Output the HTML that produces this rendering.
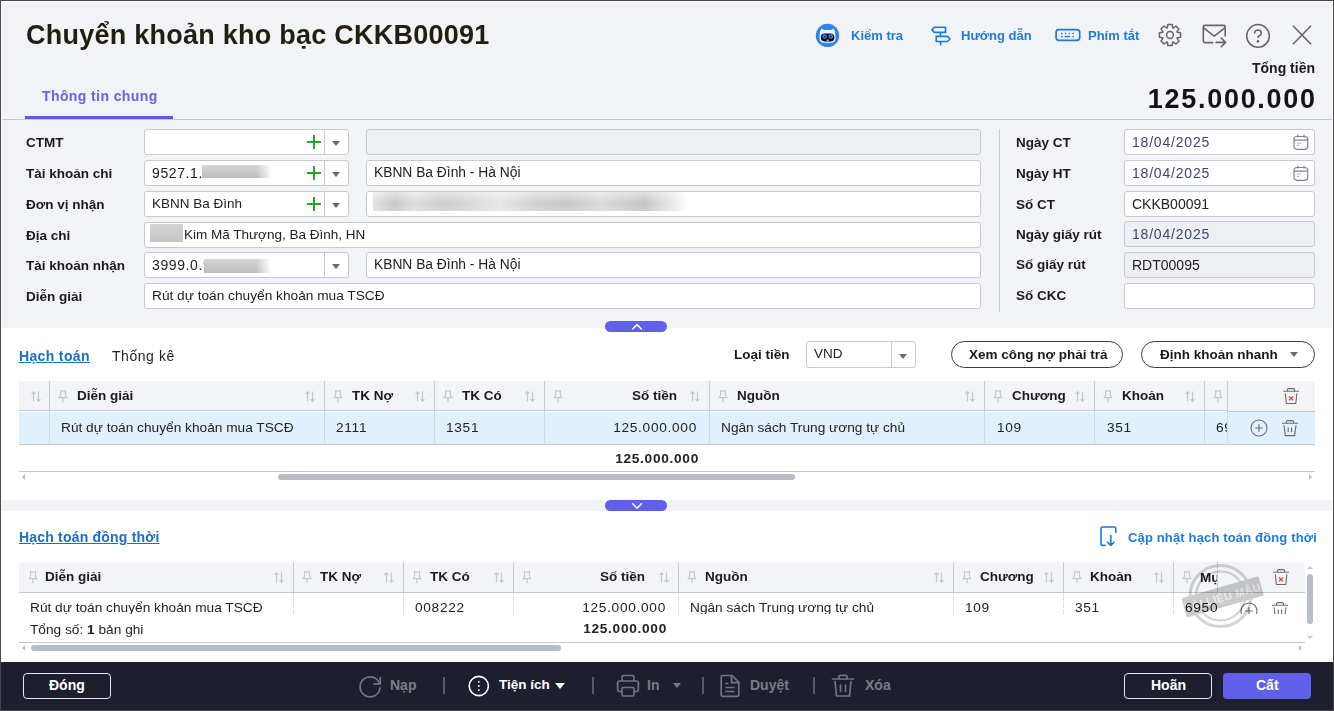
<!DOCTYPE html>
<html><head><meta charset="utf-8">
<style>
*{box-sizing:border-box;margin:0;padding:0}
html,body{width:1334px;height:711px;overflow:hidden;background:#f2f3f7;font-family:"Liberation Sans",sans-serif;color:#1f1f1f;position:relative}
.a{position:absolute}
.t{position:absolute;white-space:nowrap;line-height:1}
.b{font-weight:bold}
.frame{position:absolute;left:0;top:0;width:1334px;height:711px;border:1px solid #4a4846;pointer-events:none;z-index:60}
.inner{position:absolute;left:1px;top:1px;width:1332px;height:709px;border:1px solid #ffffff;pointer-events:none;z-index:59}
.inp{position:absolute;background:#fff;border:1px solid #c6c8d3;border-radius:3px;height:26px}
.dis{background:#eeeff3}
.lbl{position:absolute;font-weight:bold;font-size:13.5px;white-space:nowrap;line-height:1;color:#1a1a1a}
.val{position:absolute;font-size:13.5px;white-space:nowrap;line-height:1;color:#222}
.plus{position:absolute;left:162px;top:5px;width:14px;height:14px}
.plus:before{content:"";position:absolute;left:6px;top:0;width:2px;height:14px;background:#22aa22}
.plus:after{content:"";position:absolute;left:0;top:6px;width:14px;height:2px;background:#22aa22}
.sep{position:absolute;left:179px;top:0;width:1px;height:24px;background:#c6c8d3}
.tri{position:absolute;left:187px;top:11px;width:0;height:0;border-left:4.7px solid transparent;border-right:4.7px solid transparent;border-top:5.3px solid #6b6b6b}
.blur{position:absolute;background:linear-gradient(90deg,rgba(255,255,255,0) 0%,rgba(255,255,255,0) 78%,#fff 100%),linear-gradient(180deg,#d6d6d6,#bcbcbc);}
.blurb{position:absolute;background:linear-gradient(180deg,#d4d4d4,#c4c4c4)}
.blur2{position:absolute;background:linear-gradient(180deg,rgba(255,255,255,0.5) 0%,rgba(255,255,255,0) 55%,rgba(255,255,255,0.15) 100%),linear-gradient(90deg,#e0e0e0 0%,#c9c9c9 7%,#dcdcdc 13%,#cdcdcd 22%,#d6d6d6 30%,#e6e6e6 40%,#cfcfcf 52%,#c8c8c8 62%,#dadada 72%,#c4c4c4 86%,#f2f2f2 97%,#ffffff 100%)}
.cal{position:absolute;left:167px;top:3px}
.th{font-size:13.5px;color:#1a1a1a}
.td{font-size:13.7px;color:#222}
.dg{letter-spacing:0.7px}
.dg2{letter-spacing:0.6px;font-size:14px}
.dt{letter-spacing:0.8px;color:#3d4670;font-size:14px}
.dotv{position:absolute;width:1px;background:repeating-linear-gradient(180deg,#c2c5ce 0 1px,transparent 1px 2px)}
</style></head><body>
<div class="frame"></div><div class="inner"></div>
<!-- header -->
<div class="t b" style="left:26px;top:22px;font-size:27px;letter-spacing:0.25px;color:#231f10">Chuyển khoản kho bạc CKKB00091</div>
<div class="t b" style="left:42px;top:89px;font-size:14px;letter-spacing:0.4px;color:#6363e6">Thông tin chung</div>
<div class="a" style="left:25px;top:116px;width:148px;height:3px;background:#5b5be8"></div>
<div class="a" style="left:2px;top:119px;width:1330px;height:1px;background:#c5c7cf"></div>

<!-- toolbar -->
<svg class="a" style="left:815px;top:23px" width="25" height="25" viewBox="0 0 25 25">
  <circle cx="12.5" cy="12.4" r="11.7" fill="#3584e8"/>
  <path d="M5 8.5 L6.5 5.5 L9 7 L16 7 L18.5 5.5 L20 8.5 L20.5 15 Q20.5 19.5 16 19.8 L9 19.8 Q4.5 19.5 4.5 15 Z" fill="#eef5ff"/>
  <rect x="5.8" y="10.5" width="13.6" height="8" rx="4" fill="#0a0a14"/>
  <circle cx="9.6" cy="13.6" r="2.3" fill="#2f86f0"/><circle cx="15.8" cy="13.6" r="2.3" fill="#2f86f0"/>
  <circle cx="9.6" cy="13.6" r="0.9" fill="#1a1a30"/><circle cx="15.8" cy="13.6" r="0.9" fill="#1a1a30"/>
  <rect x="11.6" y="16.6" width="2.2" height="1.2" fill="#ddd"/>
</svg>
<div class="t b" style="left:851px;top:29px;font-size:13px;color:#1f7bd6">Kiểm tra</div>
<svg class="a" style="left:930px;top:25px" width="22" height="22" viewBox="0 0 22 22" fill="none" stroke="#1a7ad6" stroke-width="1.6" stroke-linejoin="round">
  <path d="M4.3 2.2 H15.5 V7.4 H4.3 L1.9 4.8 Z"/>
  <path d="M6.2 11.4 H17.5 L20 14 L17.5 16.5 H6.2 Z"/>
  <path d="M10.6 7.4 V11.4 M10.6 16.5 V20.4"/>
</svg>
<div class="t b" style="left:961px;top:29px;font-size:13px;color:#1f7bd6">Hướng dẫn</div>
<svg class="a" style="left:1054px;top:27px" width="28" height="16" viewBox="0 0 28 16" fill="none">
  <rect x="2.1" y="2.6" width="23.6" height="10.8" rx="2.8" stroke="#1a7ad6" stroke-width="1.7"/>
  <g fill="#1a7ad6"><rect x="7" y="5.8" width="1.6" height="1.4"/><rect x="10.8" y="5.8" width="1.6" height="1.4"/><rect x="14.6" y="5.8" width="1.6" height="1.4"/><rect x="18.4" y="5.8" width="1.6" height="1.4"/>
  <rect x="7" y="8.9" width="1.6" height="1.4"/><rect x="10.6" y="8.9" width="5.4" height="1.4"/><rect x="18.4" y="8.9" width="1.6" height="1.4"/></g>
</svg>
<div class="t b" style="left:1088px;top:29px;font-size:13px;color:#1f7bd6">Phím tắt</div>
<svg class="a" style="left:1156px;top:22px" width="28" height="28" viewBox="0 0 28 28" fill="none" stroke="#666" stroke-width="1.5" stroke-linejoin="round">
  <path d="M21.11 10.32 L24.58 10.85 L24.58 15.15 L21.11 15.68 L20.92 16.14 L23.00 18.97 L19.97 22.00 L17.14 19.92 L16.68 20.11 L16.15 23.58 L11.85 23.58 L11.32 20.11 L10.86 19.92 L8.03 22.00 L5.00 18.97 L7.08 16.14 L6.89 15.68 L3.42 15.15 L3.42 10.85 L6.89 10.32 L7.08 9.86 L5.00 7.03 L8.03 4.00 L10.86 6.08 L11.32 5.89 L11.85 2.42 L16.15 2.42 L16.68 5.89 L17.14 6.08 L19.97 4.00 L23.00 7.03 L20.92 9.86 Z"/>
  <circle cx="14" cy="13" r="3.4"/>
</svg>
<svg class="a" style="left:1200px;top:22px" width="30" height="28" viewBox="0 0 30 28" fill="none" stroke="#666" stroke-width="1.6" stroke-linecap="round" stroke-linejoin="round">
  <path d="M12.7 20.6 H5 Q3.3 20.6 3.3 19 V5 Q3.3 3.4 5 3.4 H23.5 Q25.2 3.4 25.2 5 V14"/>
  <path d="M3.6 5.8 L14.2 14.2 L24.8 5.8"/>
  <path d="M16.2 20.4 H25.6 M21.2 16 L25.6 20.4 L21.2 24.8"/>
</svg>
<svg class="a" style="left:1244px;top:22px" width="28" height="28" viewBox="0 0 28 28" fill="none" stroke="#666" stroke-width="1.5" stroke-linecap="round">
  <circle cx="14" cy="13.9" r="11.3"/>
  <path d="M10.6 11.1 Q10.8 7.9 14 7.9 Q17.3 7.9 17.3 10.9 Q17.3 13 14.2 14.5 V15.4"/>
  <circle cx="14" cy="19.3" r="0.6" fill="#666"/>
</svg>
<svg class="a" style="left:1290px;top:23px" width="24" height="24" viewBox="0 0 24 24" stroke="#666" stroke-width="1.6">
  <path d="M3 2.7 L21 21.2 M21 2.7 L3 21.2"/>
</svg>

<div class="t b" style="right:19px;top:61px;font-size:14px;color:#1a1a1a">Tổng tiền</div>
<div class="t b" style="right:17.3px;top:86px;font-size:27px;letter-spacing:1.7px;color:#141414">125.000.000</div>
<!-- form -->
<div class="lbl" style="left:26px;top:136px">CTMT</div>
<div class="lbl" style="left:26px;top:167px">Tài khoản chi</div>
<div class="lbl" style="left:26px;top:198px">Đơn vị nhận</div>
<div class="lbl" style="left:26px;top:229px">Địa chỉ</div>
<div class="lbl" style="left:26px;top:259px">Tài khoản nhận</div>
<div class="lbl" style="left:26px;top:290px">Diễn giải</div>

<!-- combos col1 -->
<div class="inp" style="left:144px;top:129px;width:205px"><div class="plus"></div><div class="sep"></div><div class="tri"></div></div>
<div class="inp" style="left:144px;top:160px;width:205px"><div class="val dg2" style="left:7px;top:5px">9527.1.</div><div class="blur" style="left:57px;top:4px;width:70px;height:13px"></div><div class="plus"></div><div class="sep"></div><div class="tri"></div></div>
<div class="inp" style="left:144px;top:191px;width:205px"><div class="val" style="left:7px;top:5px">KBNN Ba Đình</div><div class="plus"></div><div class="sep"></div><div class="tri"></div></div>
<div class="inp" style="left:144px;top:222px;width:837px"><div class="blurb" style="left:5px;top:1px;width:33px;height:18px"></div><div class="val" style="left:39px;top:5px">Kim Mã Thượng, Ba Đình, HN</div></div>
<div class="inp" style="left:144px;top:252px;width:205px"><div class="val dg2" style="left:7px;top:5px">3999.0.9</div><div class="blur" style="left:59px;top:6px;width:67px;height:14px"></div><div class="sep"></div><div class="tri"></div></div>
<div class="inp" style="left:144px;top:283px;width:837px"><div class="val" style="left:7px;top:5px;font-size:13.7px">Rút dự toán chuyển khoản mua TSCĐ</div></div>

<!-- col2 -->
<div class="inp dis" style="left:366px;top:129px;width:615px"></div>
<div class="inp" style="left:366px;top:160px;width:615px"><div class="val" style="left:7px;top:5px;font-size:13.8px">KBNN Ba Đình - Hà Nội</div></div>
<div class="inp" style="left:366px;top:191px;width:615px"><div class="blur2" style="left:6px;top:0px;width:316px;height:19px"></div></div>
<div class="inp" style="left:366px;top:252px;width:615px"><div class="val" style="left:7px;top:5px;font-size:13.8px">KBNN Ba Đình - Hà Nội</div></div>

<!-- divider -->
<div class="a" style="left:999px;top:129px;width:1px;height:183px;background:#c8cad3"></div>

<!-- right labels -->
<div class="lbl" style="left:1016px;top:136px">Ngày CT</div>
<div class="lbl" style="left:1016px;top:167px">Ngày HT</div>
<div class="lbl" style="left:1016px;top:198px">Số CT</div>
<div class="lbl" style="left:1016px;top:228px">Ngày giấy rút</div>
<div class="lbl" style="left:1016px;top:258px">Số giấy rút</div>
<div class="lbl" style="left:1016px;top:289px">Số CKC</div>

<div class="inp" style="left:1124px;top:129px;width:191px"><div class="val dt" style="left:7px;top:5px">18/04/2025</div><svg class="cal" width="18" height="18" viewBox="0 0 18 18"><rect x="2" y="3.5" width="13.8" height="12.8" rx="3" fill="none" stroke="#7c839b" stroke-width="1.2"/><path d="M2 7.2 H15.8 M5.8 1.8 V4.6 M12 1.8 V4.6" stroke="#7c839b" stroke-width="1.2"/><rect x="5.3" y="9.6" width="1.2" height="1.1" fill="#7c839b"/><rect x="7.6" y="9.6" width="1.2" height="1.1" fill="#7c839b"/><rect x="5.3" y="11.9" width="1.2" height="1.1" fill="#7c839b"/></svg></div>
<div class="inp" style="left:1124px;top:160px;width:191px"><div class="val dt" style="left:7px;top:5px">18/04/2025</div><svg class="cal" width="18" height="18" viewBox="0 0 18 18"><rect x="2" y="3.5" width="13.8" height="12.8" rx="3" fill="none" stroke="#7c839b" stroke-width="1.2"/><path d="M2 7.2 H15.8 M5.8 1.8 V4.6 M12 1.8 V4.6" stroke="#7c839b" stroke-width="1.2"/><rect x="5.3" y="9.6" width="1.2" height="1.1" fill="#7c839b"/><rect x="7.6" y="9.6" width="1.2" height="1.1" fill="#7c839b"/><rect x="5.3" y="11.9" width="1.2" height="1.1" fill="#7c839b"/></svg></div>
<div class="inp" style="left:1124px;top:191px;width:191px"><div class="val" style="left:7px;top:5px;font-size:14px">CKKB00091</div></div>
<div class="inp dis" style="left:1124px;top:221px;width:191px"><div class="val dt" style="left:7px;top:5px">18/04/2025</div></div>
<div class="inp dis" style="left:1124px;top:252px;width:191px"><div class="val" style="left:7px;top:5px;font-size:14px">RDT00095</div></div>
<div class="inp" style="left:1124px;top:283px;width:191px"></div>

<!-- collapse up -->
<div class="a" style="left:605px;top:321px;width:62px;height:11px;background:#5f5fea;border-radius:5.5px;z-index:5"><svg class="a" style="left:26px;top:1px" width="12" height="9" viewBox="0 0 12 9"><path d="M1.2 7.5 L6 2.6 L10.8 7.5" fill="none" stroke="#fff" stroke-width="1.6"/></svg></div>
<!-- section 2 white -->
<div class="a" style="left:2px;top:328px;width:1330px;height:172px;background:#fff"></div>
<!-- section 3 white -->
<div class="a" style="left:2px;top:511px;width:1330px;height:151px;background:#fff"></div>
<div class="t b" style="left:19px;top:349px;font-size:14px;letter-spacing:0.35px;color:#1a70c8;text-decoration:underline">Hạch toán</div>
<div class="t" style="left:112px;top:349px;font-size:14px;letter-spacing:0.55px;color:#1f1f1f">Thống kê</div>
<div class="t b" style="left:734px;top:348px;font-size:13.5px;color:#1a1a1a">Loại tiền</div>
<div class="inp" style="left:806px;top:341px;width:110px;height:27px"><div class="val" style="left:7px;top:5px;font-size:13.5px">VND</div><div class="sep" style="left:84px;height:25px"></div><div class="tri" style="left:92px;top:11.5px"></div></div>
<div class="a" style="left:951px;top:341px;width:172px;height:27px;border:1px solid #3a3a3a;border-radius:14px;background:#fff"></div>
<div class="t b" style="left:969px;top:348px;font-size:13.5px;color:#1a1a1a">Xem công nợ phải trả</div>
<div class="a" style="left:1141px;top:341px;width:174px;height:27px;border:1px solid #3a3a3a;border-radius:14px;background:#fff"></div>
<div class="t b" style="left:1160px;top:348px;font-size:13.5px;color:#1a1a1a">Định khoản nhanh</div>
<div class="a" style="left:1290px;top:352px;width:0;height:0;border-left:4.5px solid transparent;border-right:4.5px solid transparent;border-top:5.5px solid #6b6b6b"></div>
<div class="a" style="left:19px;top:381px;width:1296px;height:30px;background:#f3f4f8;border-bottom:1px solid #c5c8d1"></div>
<div class="a" style="left:19px;top:411px;width:1296px;height:34px;background:#e1f0fd;border-top:1px solid #fff;border-bottom:1px solid #c5c8d1"></div>
<div class="a" style="left:19px;top:471px;width:1296px;height:1px;background:#c5c8d1"></div>
<div class="a" style="left:278px;top:474px;width:517px;height:6px;border-radius:3px;background:#b8bcc5"></div>
<div class="a" style="left:22px;top:474px;width:0;height:0;border-top:3.2px solid transparent;border-bottom:3.2px solid transparent;border-right:3px solid #b8bcc5"></div>
<div class="a" style="left:1309px;top:474px;width:0;height:0;border-top:3.2px solid transparent;border-bottom:3.2px solid transparent;border-left:3px solid #b8bcc5"></div>
<svg class="a" style="left:31px;top:391px" width="10" height="11" viewBox="0 0 10 11" fill="none" stroke="#c3c6cf" stroke-width="1.2"><path d="M2.5 10.5 V0.8 M0.6 2.8 L2.5 0.8 L4.4 2.8 M7.5 0.5 V10.2 M5.6 8.2 L7.5 10.2 L9.4 8.2"/></svg>
<div class="a" style="left:49px;top:381px;width:1px;height:29px;background:#c8cad3"></div>
<div class="a dotv" style="left:49px;top:411px;height:33px"></div>
<svg class="a" style="left:58px;top:390px" width="10" height="13" viewBox="0 0 10 13" fill="none" stroke="#c3c6cf" stroke-width="1.2"><path d="M2.6 0.8 H7.4 V5.2 L8.8 7.6 H1.2 L2.6 5.2 Z M5 7.6 V12.3"/></svg>
<div class="t b th" style="left:77px;top:389px">Diễn giải</div>
<svg class="a" style="left:305px;top:391px" width="10" height="11" viewBox="0 0 10 11" fill="none" stroke="#c3c6cf" stroke-width="1.2"><path d="M2.5 10.5 V0.8 M0.6 2.8 L2.5 0.8 L4.4 2.8 M7.5 0.5 V10.2 M5.6 8.2 L7.5 10.2 L9.4 8.2"/></svg>
<div class="a" style="left:324px;top:381px;width:1px;height:29px;background:#c8cad3"></div>
<div class="a dotv" style="left:324px;top:411px;height:33px"></div>
<svg class="a" style="left:333px;top:390px" width="10" height="13" viewBox="0 0 10 13" fill="none" stroke="#c3c6cf" stroke-width="1.2"><path d="M2.6 0.8 H7.4 V5.2 L8.8 7.6 H1.2 L2.6 5.2 Z M5 7.6 V12.3"/></svg>
<div class="t b th" style="left:352px;top:389px">TK Nợ</div>
<svg class="a" style="left:415px;top:391px" width="10" height="11" viewBox="0 0 10 11" fill="none" stroke="#c3c6cf" stroke-width="1.2"><path d="M2.5 10.5 V0.8 M0.6 2.8 L2.5 0.8 L4.4 2.8 M7.5 0.5 V10.2 M5.6 8.2 L7.5 10.2 L9.4 8.2"/></svg>
<div class="a" style="left:434px;top:381px;width:1px;height:29px;background:#c8cad3"></div>
<div class="a dotv" style="left:434px;top:411px;height:33px"></div>
<svg class="a" style="left:443px;top:390px" width="10" height="13" viewBox="0 0 10 13" fill="none" stroke="#c3c6cf" stroke-width="1.2"><path d="M2.6 0.8 H7.4 V5.2 L8.8 7.6 H1.2 L2.6 5.2 Z M5 7.6 V12.3"/></svg>
<div class="t b th" style="left:462px;top:389px">TK Có</div>
<svg class="a" style="left:525px;top:391px" width="10" height="11" viewBox="0 0 10 11" fill="none" stroke="#c3c6cf" stroke-width="1.2"><path d="M2.5 10.5 V0.8 M0.6 2.8 L2.5 0.8 L4.4 2.8 M7.5 0.5 V10.2 M5.6 8.2 L7.5 10.2 L9.4 8.2"/></svg>
<div class="a" style="left:544px;top:381px;width:1px;height:29px;background:#c8cad3"></div>
<div class="a dotv" style="left:544px;top:411px;height:33px"></div>
<svg class="a" style="left:553px;top:390px" width="10" height="13" viewBox="0 0 10 13" fill="none" stroke="#c3c6cf" stroke-width="1.2"><path d="M2.6 0.8 H7.4 V5.2 L8.8 7.6 H1.2 L2.6 5.2 Z M5 7.6 V12.3"/></svg>
<div class="t b th" style="right:657px;top:389px">Số tiền</div>
<svg class="a" style="left:690px;top:391px" width="10" height="11" viewBox="0 0 10 11" fill="none" stroke="#c3c6cf" stroke-width="1.2"><path d="M2.5 10.5 V0.8 M0.6 2.8 L2.5 0.8 L4.4 2.8 M7.5 0.5 V10.2 M5.6 8.2 L7.5 10.2 L9.4 8.2"/></svg>
<div class="a" style="left:709px;top:381px;width:1px;height:29px;background:#c8cad3"></div>
<div class="a dotv" style="left:709px;top:411px;height:33px"></div>
<svg class="a" style="left:718px;top:390px" width="10" height="13" viewBox="0 0 10 13" fill="none" stroke="#c3c6cf" stroke-width="1.2"><path d="M2.6 0.8 H7.4 V5.2 L8.8 7.6 H1.2 L2.6 5.2 Z M5 7.6 V12.3"/></svg>
<div class="t b th" style="left:737px;top:389px">Nguồn</div>
<svg class="a" style="left:965px;top:391px" width="10" height="11" viewBox="0 0 10 11" fill="none" stroke="#c3c6cf" stroke-width="1.2"><path d="M2.5 10.5 V0.8 M0.6 2.8 L2.5 0.8 L4.4 2.8 M7.5 0.5 V10.2 M5.6 8.2 L7.5 10.2 L9.4 8.2"/></svg>
<div class="a" style="left:984px;top:381px;width:1px;height:29px;background:#c8cad3"></div>
<div class="a dotv" style="left:984px;top:411px;height:33px"></div>
<svg class="a" style="left:993px;top:390px" width="10" height="13" viewBox="0 0 10 13" fill="none" stroke="#c3c6cf" stroke-width="1.2"><path d="M2.6 0.8 H7.4 V5.2 L8.8 7.6 H1.2 L2.6 5.2 Z M5 7.6 V12.3"/></svg>
<div class="t b th" style="left:1012px;top:389px">Chương</div>
<svg class="a" style="left:1075px;top:391px" width="10" height="11" viewBox="0 0 10 11" fill="none" stroke="#c3c6cf" stroke-width="1.2"><path d="M2.5 10.5 V0.8 M0.6 2.8 L2.5 0.8 L4.4 2.8 M7.5 0.5 V10.2 M5.6 8.2 L7.5 10.2 L9.4 8.2"/></svg>
<div class="a" style="left:1094px;top:381px;width:1px;height:29px;background:#c8cad3"></div>
<div class="a dotv" style="left:1094px;top:411px;height:33px"></div>
<svg class="a" style="left:1103px;top:390px" width="10" height="13" viewBox="0 0 10 13" fill="none" stroke="#c3c6cf" stroke-width="1.2"><path d="M2.6 0.8 H7.4 V5.2 L8.8 7.6 H1.2 L2.6 5.2 Z M5 7.6 V12.3"/></svg>
<div class="t b th" style="left:1122px;top:389px">Khoản</div>
<svg class="a" style="left:1185px;top:391px" width="10" height="11" viewBox="0 0 10 11" fill="none" stroke="#c3c6cf" stroke-width="1.2"><path d="M2.5 10.5 V0.8 M0.6 2.8 L2.5 0.8 L4.4 2.8 M7.5 0.5 V10.2 M5.6 8.2 L7.5 10.2 L9.4 8.2"/></svg>
<div class="a" style="left:1204px;top:381px;width:1px;height:29px;background:#c8cad3"></div>
<div class="a dotv" style="left:1204px;top:411px;height:33px"></div>
<svg class="a" style="left:1213px;top:390px" width="10" height="13" viewBox="0 0 10 13" fill="none" stroke="#c3c6cf" stroke-width="1.2"><path d="M2.6 0.8 H7.4 V5.2 L8.8 7.6 H1.2 L2.6 5.2 Z M5 7.6 V12.3"/></svg>
<div class="a" style="left:1227px;top:381px;width:88px;height:31px;background:#f3f4f8;border-left:1px solid #c8cad3;border-bottom:1px solid #c5c8d1;z-index:2"></div>
<div class="a" style="left:1227px;top:412px;width:88px;height:33px;background:#e1f0fd;border-left:1px dotted #c8cad3;border-bottom:1px solid #c5c8d1;z-index:2"></div>
<div style="position:absolute;left:0;top:0;z-index:3"><svg class="a" style="left:1282px;top:388px" width="18" height="18" viewBox="0 0 18 18" fill="none" stroke="#6b6b6b" stroke-width="1.1"><path d="M1 3.3 H17 M5.4 3.3 V1.6 Q5.4 0.6 6.4 0.6 H11.6 Q12.6 0.6 12.6 1.6 V3.3 M3.3 5.2 L4.4 15.5 H13.8 L14.9 5.2"/><path d="M7 8.5 L11 12.4 M11 8.5 L7 12.4" stroke="#f23b3b" stroke-width="1.3"/></svg><svg class="a" style="left:1250px;top:419px" width="18" height="18" viewBox="0 0 18 18" fill="none" stroke="#6b6b6b" stroke-width="1.1"><circle cx="9" cy="9" r="8"/><path d="M5.2 9 H12.8 M9 5.2 V12.8"/></svg><svg class="a" style="left:1281px;top:420px" width="18" height="18" viewBox="0 0 18 18" fill="none" stroke="#6b6b6b" stroke-width="1.1"><path d="M1 3.3 H17 M5.4 3.3 V1.6 Q5.4 0.6 6.4 0.6 H11.6 Q12.6 0.6 12.6 1.6 V3.3 M3 5.2 L4.4 15.6 H13.6 L15 5.2 M7.2 7.6 V12 M10.6 7.6 V12"/></svg></div>
<div class="t td" style="left:61px;top:421px">Rút dự toán chuyển khoản mua TSCĐ</div>
<div class="t td dg" style="left:336px;top:421px">2111</div>
<div class="t td dg" style="left:446px;top:421px">1351</div>
<div class="t td dg" style="right:637px;top:421px">125.000.000</div>
<div class="t td" style="left:721px;top:421px">Ngân sách Trung ương tự chủ</div>
<div class="t td dg" style="left:997px;top:421px">109</div>
<div class="t td dg" style="left:1107px;top:421px">351</div>
<div class="a" style="left:1205px;top:411px;width:22px;height:32px;overflow:hidden"><div class="t td dg" style="left:11px;top:10px">69</div></div>
<div class="t b td dg" style="right:635px;top:452px">125.000.000</div>
<div class="a" style="left:2px;top:500px;width:1330px;height:11px;background:#f2f3f7"></div>
<div class="a" style="left:605px;top:500px;width:62px;height:11px;background:#5f5fea;border-radius:5.5px;z-index:5"><svg class="a" style="left:26px;top:1px" width="12" height="9" viewBox="0 0 12 9"><path d="M1.2 2.2 L6 7.2 L10.8 2.2" fill="none" stroke="#fff" stroke-width="1.6"/></svg></div>
<div class="t b" style="left:19px;top:530px;font-size:14px;letter-spacing:0.2px;color:#1a70c8;text-decoration:underline">Hạch toán đồng thời</div>
<svg class="a" style="left:1099px;top:526px" width="20" height="21" viewBox="0 0 20 21" fill="none" stroke="#1a7ad6" stroke-width="1.6" stroke-linecap="round" stroke-linejoin="round"><path d="M6 19.4 H3.2 Q2 19.4 2 18.2 V2.2 Q2 1 3.2 1 H15.6 Q16.8 1 16.8 2.2 V6.5"/><path d="M11.8 9.5 V19.3 M8.6 16.2 L11.8 19.4 L15 16.2"/></svg>
<div class="t b" style="left:1128px;top:531px;font-size:13px;letter-spacing:0.15px;color:#1f7bd6">Cập nhật hạch toán đồng thời</div>
<div class="a" style="left:19px;top:562px;width:1286px;height:31px;background:#f3f4f8;border-bottom:1px solid #c5c8d1"></div>
<div class="a" style="left:19px;top:642px;width:1286px;height:1px;background:#c5c8d1"></div>
<div class="a" style="left:31px;top:645px;width:530px;height:6px;border-radius:3px;background:#b8bcc5"></div>
<div class="a" style="left:22px;top:645px;width:0;height:0;border-top:3.2px solid transparent;border-bottom:3.2px solid transparent;border-right:3px solid #b8bcc5"></div>
<div class="a" style="left:1299px;top:645px;width:0;height:0;border-top:3.2px solid transparent;border-bottom:3.2px solid transparent;border-left:3px solid #b8bcc5"></div>
<div class="a" style="left:1307px;top:574px;width:6px;height:50px;border-radius:3px;background:#b8bcc5"></div>
<div class="a" style="left:1307px;top:566px;width:0;height:0;border-left:3px solid transparent;border-right:3px solid transparent;border-bottom:3px solid #c3c6cf"></div>
<div class="a" style="left:1307px;top:636px;width:0;height:0;border-left:3px solid transparent;border-right:3px solid transparent;border-top:3px solid #c3c6cf"></div>
<svg class="a" style="left:28px;top:571px" width="10" height="13" viewBox="0 0 10 13" fill="none" stroke="#c3c6cf" stroke-width="1.2"><path d="M2.6 0.8 H7.4 V5.2 L8.8 7.6 H1.2 L2.6 5.2 Z M5 7.6 V12.3"/></svg>
<div class="t b th" style="left:45px;top:570px">Diễn giải</div>
<svg class="a" style="left:274px;top:572px" width="10" height="11" viewBox="0 0 10 11" fill="none" stroke="#c3c6cf" stroke-width="1.2"><path d="M2.5 10.5 V0.8 M0.6 2.8 L2.5 0.8 L4.4 2.8 M7.5 0.5 V10.2 M5.6 8.2 L7.5 10.2 L9.4 8.2"/></svg>
<div class="a" style="left:293px;top:562px;width:1px;height:30px;background:#c8cad3"></div>
<div class="a dotv" style="left:293px;top:593px;height:21px"></div>
<svg class="a" style="left:302px;top:571px" width="10" height="13" viewBox="0 0 10 13" fill="none" stroke="#c3c6cf" stroke-width="1.2"><path d="M2.6 0.8 H7.4 V5.2 L8.8 7.6 H1.2 L2.6 5.2 Z M5 7.6 V12.3"/></svg>
<div class="t b th" style="left:320px;top:570px">TK Nợ</div>
<svg class="a" style="left:384px;top:572px" width="10" height="11" viewBox="0 0 10 11" fill="none" stroke="#c3c6cf" stroke-width="1.2"><path d="M2.5 10.5 V0.8 M0.6 2.8 L2.5 0.8 L4.4 2.8 M7.5 0.5 V10.2 M5.6 8.2 L7.5 10.2 L9.4 8.2"/></svg>
<div class="a" style="left:403px;top:562px;width:1px;height:30px;background:#c8cad3"></div>
<div class="a dotv" style="left:403px;top:593px;height:21px"></div>
<svg class="a" style="left:412px;top:571px" width="10" height="13" viewBox="0 0 10 13" fill="none" stroke="#c3c6cf" stroke-width="1.2"><path d="M2.6 0.8 H7.4 V5.2 L8.8 7.6 H1.2 L2.6 5.2 Z M5 7.6 V12.3"/></svg>
<div class="t b th" style="left:430px;top:570px">TK Có</div>
<svg class="a" style="left:494px;top:572px" width="10" height="11" viewBox="0 0 10 11" fill="none" stroke="#c3c6cf" stroke-width="1.2"><path d="M2.5 10.5 V0.8 M0.6 2.8 L2.5 0.8 L4.4 2.8 M7.5 0.5 V10.2 M5.6 8.2 L7.5 10.2 L9.4 8.2"/></svg>
<div class="a" style="left:513px;top:562px;width:1px;height:30px;background:#c8cad3"></div>
<div class="a dotv" style="left:513px;top:593px;height:21px"></div>
<svg class="a" style="left:522px;top:571px" width="10" height="13" viewBox="0 0 10 13" fill="none" stroke="#c3c6cf" stroke-width="1.2"><path d="M2.6 0.8 H7.4 V5.2 L8.8 7.6 H1.2 L2.6 5.2 Z M5 7.6 V12.3"/></svg>
<div class="t b th" style="right:689px;top:570px">Số tiền</div>
<svg class="a" style="left:659px;top:572px" width="10" height="11" viewBox="0 0 10 11" fill="none" stroke="#c3c6cf" stroke-width="1.2"><path d="M2.5 10.5 V0.8 M0.6 2.8 L2.5 0.8 L4.4 2.8 M7.5 0.5 V10.2 M5.6 8.2 L7.5 10.2 L9.4 8.2"/></svg>
<div class="a" style="left:678px;top:562px;width:1px;height:30px;background:#c8cad3"></div>
<div class="a dotv" style="left:678px;top:593px;height:21px"></div>
<svg class="a" style="left:687px;top:571px" width="10" height="13" viewBox="0 0 10 13" fill="none" stroke="#c3c6cf" stroke-width="1.2"><path d="M2.6 0.8 H7.4 V5.2 L8.8 7.6 H1.2 L2.6 5.2 Z M5 7.6 V12.3"/></svg>
<div class="t b th" style="left:705px;top:570px">Nguồn</div>
<svg class="a" style="left:934px;top:572px" width="10" height="11" viewBox="0 0 10 11" fill="none" stroke="#c3c6cf" stroke-width="1.2"><path d="M2.5 10.5 V0.8 M0.6 2.8 L2.5 0.8 L4.4 2.8 M7.5 0.5 V10.2 M5.6 8.2 L7.5 10.2 L9.4 8.2"/></svg>
<div class="a" style="left:953px;top:562px;width:1px;height:30px;background:#c8cad3"></div>
<div class="a dotv" style="left:953px;top:593px;height:21px"></div>
<svg class="a" style="left:962px;top:571px" width="10" height="13" viewBox="0 0 10 13" fill="none" stroke="#c3c6cf" stroke-width="1.2"><path d="M2.6 0.8 H7.4 V5.2 L8.8 7.6 H1.2 L2.6 5.2 Z M5 7.6 V12.3"/></svg>
<div class="t b th" style="left:980px;top:570px">Chương</div>
<svg class="a" style="left:1044px;top:572px" width="10" height="11" viewBox="0 0 10 11" fill="none" stroke="#c3c6cf" stroke-width="1.2"><path d="M2.5 10.5 V0.8 M0.6 2.8 L2.5 0.8 L4.4 2.8 M7.5 0.5 V10.2 M5.6 8.2 L7.5 10.2 L9.4 8.2"/></svg>
<div class="a" style="left:1063px;top:562px;width:1px;height:30px;background:#c8cad3"></div>
<div class="a dotv" style="left:1063px;top:593px;height:21px"></div>
<svg class="a" style="left:1072px;top:571px" width="10" height="13" viewBox="0 0 10 13" fill="none" stroke="#c3c6cf" stroke-width="1.2"><path d="M2.6 0.8 H7.4 V5.2 L8.8 7.6 H1.2 L2.6 5.2 Z M5 7.6 V12.3"/></svg>
<div class="t b th" style="left:1090px;top:570px">Khoản</div>
<svg class="a" style="left:1154px;top:572px" width="10" height="11" viewBox="0 0 10 11" fill="none" stroke="#c3c6cf" stroke-width="1.2"><path d="M2.5 10.5 V0.8 M0.6 2.8 L2.5 0.8 L4.4 2.8 M7.5 0.5 V10.2 M5.6 8.2 L7.5 10.2 L9.4 8.2"/></svg>
<div class="a" style="left:1173px;top:562px;width:1px;height:30px;background:#c8cad3"></div>
<div class="a dotv" style="left:1173px;top:593px;height:21px"></div>
<svg class="a" style="left:1182px;top:571px" width="10" height="13" viewBox="0 0 10 13" fill="none" stroke="#c3c6cf" stroke-width="1.2"><path d="M2.6 0.8 H7.4 V5.2 L8.8 7.6 H1.2 L2.6 5.2 Z M5 7.6 V12.3"/></svg>
<div class="a" style="left:1173px;top:565px;width:44px;height:25px;overflow:hidden"><div class="t b th" style="left:27px;top:6px">Mục</div></div>
<div class="a" style="left:1217px;top:562px;width:88px;height:31px;background:#f3f4f8;border-left:1px solid #c8cad3;border-bottom:1px solid #c5c8d1;z-index:2"></div>
<div style="position:absolute;left:0;top:0;z-index:3"><svg class="a" style="left:1272px;top:569px" width="18" height="18" viewBox="0 0 18 18" fill="none" stroke="#6b6b6b" stroke-width="1.1"><path d="M1 3.3 H17 M5.4 3.3 V1.6 Q5.4 0.6 6.4 0.6 H11.6 Q12.6 0.6 12.6 1.6 V3.3 M3.3 5.2 L4.4 15.5 H13.8 L14.9 5.2"/><path d="M7 8.5 L11 12.4 M11 8.5 L7 12.4" stroke="#f23b3b" stroke-width="1.3"/></svg></div>
<div class="a" style="left:1217px;top:593px;width:88px;height:21px;overflow:hidden;z-index:3"><svg class="a" style="left:23px;top:9px" width="18" height="18" viewBox="0 0 18 18" fill="none" stroke="#6b6b6b" stroke-width="1.1"><circle cx="9" cy="9" r="8"/><path d="M5.2 9 H12.8 M9 5.2 V12.8"/></svg><svg class="a" style="left:54px;top:9px" width="18" height="18" viewBox="0 0 18 18" fill="none" stroke="#6b6b6b" stroke-width="1.1"><path d="M1 3.3 H17 M5.4 3.3 V1.6 Q5.4 0.6 6.4 0.6 H11.6 Q12.6 0.6 12.6 1.6 V3.3 M3 5.2 L4.4 15.6 H13.6 L15 5.2 M7.2 7.6 V12 M10.6 7.6 V12"/></svg></div>
<div class="a" style="left:19px;top:593px;width:1198px;height:21px;overflow:hidden"><div class="t td" style="left:11px;top:8px">Rút dự toán chuyển khoản mua TSCĐ</div><div class="t td dg" style="left:396px;top:8px">008222</div><div class="t td dg" style="right:551px;top:8px">125.000.000</div><div class="t td" style="left:671px;top:8px">Ngân sách Trung ương tự chủ</div><div class="t td dg" style="left:946px;top:8px">109</div><div class="t td dg" style="left:1056px;top:8px">351</div><div class="t td dg" style="left:1166px;top:8px">6950</div></div>
<div class="t td" style="left:30px;top:623px">Tổng số: <b>1</b> bản ghi</div>
<div class="t b td dg" style="right:667px;top:622px">125.000.000</div>
<svg class="a" style="left:1176px;top:556px;z-index:8;mix-blend-mode:multiply" width="96" height="80" viewBox="0 0 96 80">
<g fill="none" stroke="#d4d4d4"><circle cx="44.5" cy="40" r="30.5" stroke-width="3"/><circle cx="44.5" cy="40" r="24.5" stroke-width="2.2"/></g>
<g transform="rotate(-16 46.7 40.8)"><rect x="6.7" y="30.8" width="80" height="20" rx="1" fill="#cbcbcb"/>
<text x="46.7" y="45.3" text-anchor="middle" font-family="Liberation Sans" font-weight="bold" font-size="11" letter-spacing="0.4" fill="#ececec">TÀI LIỆU MẪU</text></g>
</svg><div class="a" style="left:1px;top:662px;width:1332px;height:48px;background:#1e1f2e;z-index:61"><div style="position:absolute;left:-1px;top:-662px"><div class="a" style="left:23px;top:673px;width:88px;height:26px;border:1.3px solid #e8e8ee;border-radius:4px"></div>
<div class="t b" style="left:49px;top:678px;font-size:14px;color:#fff">Đóng</div>
<svg class="a" style="left:357px;top:673px" width="26" height="26" viewBox="0 0 26 26" fill="none" stroke="#74757f" stroke-width="1.7" stroke-linecap="round"><path d="M22.5 10.5 A10 10 0 1 0 23 15"/><path d="M23.3 4.5 V10.8 H17"/></svg>
<div class="t b" style="left:390px;top:678px;font-size:14px;color:#7b7c87">Nạp</div>
<div class="a" style="left:443px;top:677px;width:1.5px;height:17px;background:#5a5b66"></div>
<svg class="a" style="left:467px;top:675px" width="24" height="24" viewBox="0 0 24 24" fill="none" stroke="#fff" stroke-width="1.6"><circle cx="11.8" cy="11" r="9.6"/><circle cx="11.8" cy="6.8" r="0.9" fill="#fff" stroke="none"/><circle cx="11.8" cy="11" r="0.9" fill="#fff" stroke="none"/><circle cx="11.8" cy="15.2" r="0.9" fill="#fff" stroke="none"/></svg>
<div class="t b" style="left:499px;top:678px;font-size:13.5px;color:#fff">Tiện ích</div>
<div class="a" style="left:555px;top:683px;width:0;height:0;border-left:5px solid transparent;border-right:5px solid transparent;border-top:6px solid #fff"></div>
<div class="a" style="left:592px;top:677px;width:1.5px;height:17px;background:#5a5b66"></div>
<svg class="a" style="left:615px;top:673px" width="26" height="26" viewBox="0 0 26 26" fill="none" stroke="#74757f" stroke-width="1.7" stroke-linejoin="round"><path d="M7 8 V4.2 Q7 2.5 8.7 2.5 H17.3 Q19 2.5 19 4.2 V8"/><path d="M7 18.5 H4.8 Q2.6 18.5 2.6 16.3 V10.2 Q2.6 8 4.8 8 H21.2 Q23.4 8 23.4 10.2 V16.3 Q23.4 18.5 21.2 18.5 H19"/><rect x="7" y="14.5" width="12" height="8.5" rx="1.2"/></svg>
<div class="t b" style="left:647px;top:678px;font-size:14px;color:#7b7c87">In</div>
<div class="a" style="left:673px;top:683px;width:0;height:0;border-left:4.5px solid transparent;border-right:4.5px solid transparent;border-top:5.5px solid #7b7c87"></div>
<div class="a" style="left:702px;top:677px;width:1.5px;height:17px;background:#5a5b66"></div>
<svg class="a" style="left:718px;top:673px" width="24" height="26" viewBox="0 0 24 26" fill="none" stroke="#74757f" stroke-width="1.7" stroke-linejoin="round"><path d="M5 2.5 H14 L20.8 9.2 V21.5 Q20.8 23.3 19 23.3 H5 Q3.2 23.3 3.2 21.5 V4.3 Q3.2 2.5 5 2.5 Z"/><path d="M13.5 2.8 V9.6 H20.5 M7.2 10.5 H10.5 M7.2 14.5 H16.6 M7.2 18.5 H16.6"/></svg>
<div class="t b" style="left:750px;top:678px;font-size:14px;color:#7b7c87">Duyệt</div>
<div class="a" style="left:813px;top:677px;width:1.5px;height:17px;background:#5a5b66"></div>
<svg class="a" style="left:830px;top:673px" width="26" height="26" viewBox="0 0 26 26" fill="none" stroke="#74757f" stroke-width="1.7" stroke-linejoin="round" stroke-linecap="round"><path d="M2.5 6 H23.5 M9 6 V3.8 Q9 2.4 10.4 2.4 H15.6 Q17 2.4 17 3.8 V6 M5 8.5 L6.5 23 H19.5 L21 8.5 M10.5 12 V18.5 M15.5 12 V18.5"/></svg>
<div class="t b" style="left:865px;top:678px;font-size:14px;color:#7b7c87">Xóa</div>
<div class="a" style="left:1124px;top:673px;width:88px;height:26px;border:1.3px solid #e8e8ee;border-radius:4px"></div>
<div class="t b" style="left:1151px;top:678px;font-size:14px;color:#fff">Hoãn</div>
<div class="a" style="left:1223px;top:673px;width:88px;height:26px;background:#5f5fea;border-radius:4px"></div>
<div class="t b" style="left:1256px;top:678px;font-size:14px;color:#fff">Cất</div></div></div></body></html>
